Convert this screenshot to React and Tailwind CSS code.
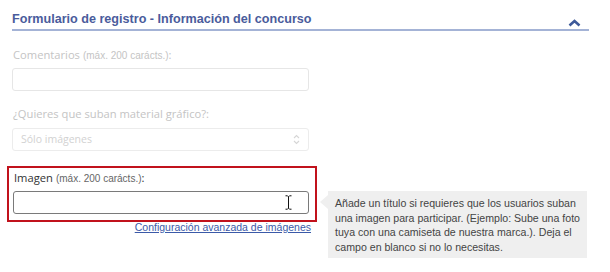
const arial = { fontFamily: '"Liberation Sans", Arial, sans-serif' };
const open = { fontFamily: '"Open Sans", sans-serif' };

function Label({ main, muted }) {
  return (
    <div
      className={`flex items-baseline h-[20px] leading-[20px] pl-[1px] ${muted ? "text-[#c4c4c4]" : "text-[#333]"}`}
      style={open}
    >
      <span className="text-[11.2px]">{main}</span>
      <span className={`text-[10px] ml-[3px] ${muted ? "" : "text-[#666]"}`} style={arial}>
        (máx. 200 carácts.)
      </span>
      <span className="text-[11.2px]">:</span>
    </div>
  );
}

export default function App() {
  return (
    <div className="w-[610px] h-[272px] bg-white overflow-hidden" style={arial}>
      <div className="pl-[12px] pr-[21px] pt-[9px]">
        <div className="flex items-end justify-between border-b-2 border-[#a4b3d6] h-[22px] pb-[3px]">
          <h1 className="text-[12.6px] font-bold text-[#4a5c9c] leading-none">
            Formulario de registro - Información del concurso
          </h1>
          <svg width="13" height="8" viewBox="0 0 13 8" className="mr-[8px] mb-[-1px]">
            <path d="M1.5 6.5 L6.5 2 L11.5 6.5" fill="none" stroke="#3e5a9a" strokeWidth="2.6" />
          </svg>
        </div>
      </div>

      <div className="pl-[12px] pt-[14px]">
        <Label main="Comentarios" muted />
        <div className="mt-[3px] w-[297px] h-[23px] border border-[#e6e6e6] rounded-[3px]" />

        <div className="mt-[13px] h-[20px] leading-[20px] pl-[1px] text-[11.2px] text-[#c4c4c4]" style={open}>
          ¿Quieres que suban material gráfico?:
        </div>
        <div
          className="mt-[4px] w-[297px] h-[23px] border border-[#ececec] rounded-[3px] flex items-center justify-between pl-[8px] pr-[8px] text-[10.5px] text-[#d2d2d2]"
          style={open}
        >
          <span>Sólo imágenes</span>
          <svg width="7" height="11" viewBox="0 0 7 11">
            <path d="M1 4 L3.5 1.5 L6 4 M1 7 L3.5 9.5 L6 7" fill="none" stroke="#d6d6d6" strokeWidth="1.1" />
          </svg>
        </div>
      </div>

      <div className="flex items-start pl-[7px] pt-[15px]">
        <div className="flex flex-col items-end shrink-0">
          <div className="w-[310px] h-[56px] border-2 border-[#c1121c] pl-[4px]">
            <Label main="Imagen" />
            <div className="mt-[3px] w-[296px] h-[23px] border border-[#7a7a7a] rounded-[3px] flex items-center justify-end pr-[16px]">
              <svg width="7" height="15" viewBox="0 0 7 15">
                <path d="M0.5 0.8 H2.5 L3.5 1.8 L4.5 0.8 H6.5 M3.5 1.8 V13.2 M0.5 14.2 H2.5 L3.5 13.2 L4.5 14.2 H6.5" fill="none" stroke="#111" strokeWidth="1" />
              </svg>
            </div>
          </div>
          <a href="#" className="mr-[6px] mt-[-1px] text-[10.5px] text-[#3b5aa8] underline leading-[12px]">
            Configuración avanzada de imágenes
          </a>
        </div>

        <div className="relative shrink-0 ml-[11px] mt-[25px] w-[259px] h-[67px] bg-[#efefef] pl-[7px] pr-[2px] pt-[5px] text-[10.6px] leading-[14.7px] text-[#444]">
          <span className="absolute left-[-8px] top-[4px] w-0 h-0 border-y-[7px] border-y-transparent border-r-[8px] border-r-[#efefef]" />
          Añade un título si requieres que los usuarios suban una imagen para participar. (Ejemplo: Sube una foto tuya con una camiseta de nuestra marca.). Deja el campo en blanco si no lo necesitas.
        </div>
      </div>
    </div>
  );
}
